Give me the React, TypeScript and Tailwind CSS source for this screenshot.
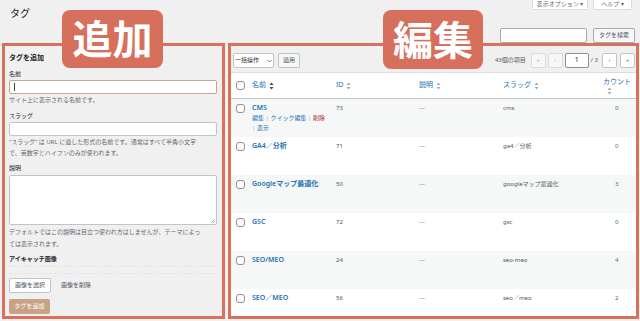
import React from "react";

const rows = [
  { name: "CMS", id: 73, slug: "cms", count: 0, actions: true },
  { name: "GA4／分析", id: 71, slug: "ga4／分析", count: 0 },
  { name: "Googleマップ最適化", id: 50, slug: "googleマップ最適化", count: 3 },
  { name: "GSC", id: 72, slug: "gsc", count: 0 },
  { name: "SEO/MEO", id: 24, slug: "seo-meo", count: 4 },
  { name: "SEO／MEO", id: 56, slug: "seo／meo", count: 2 },
];

function SortIcon({ dark = false }: { dark?: boolean }) {
  const c = dark ? "#3c434a" : "#a7aaad";
  return (
    <svg width="5" height="8" viewBox="0 0 5 8" className="shrink-0">
      <path d="M2.5 0.5 L4.5 3 L0.5 3 Z" fill={c} />
      <path d="M0.5 5 L4.5 5 L2.5 7.5 Z" fill={c} />
    </svg>
  );
}

function Check() {
  return <div className="w-[9px] h-[9px] rounded-[3px] border border-[#8c8f94] bg-white shrink-0" />;
}

function PageBtn({ label, off = false }: { label: string; off?: boolean }) {
  return (
    <div
      className={`w-[15px] h-[15px] flex items-center justify-center rounded-[2px] border text-[6px] ${
        off ? "border-[#dcdcde] bg-[#f6f7f7] text-[#a7aaad]" : "border-[#c3c4c7] bg-white text-[#50575e]"
      }`}
    >
      {label}
    </div>
  );
}

export default function App() {
  return (
    <div className="w-[640px] h-[321px] bg-[#f0f0f1] relative overflow-hidden font-['Noto_Sans','Noto_Sans_CJK_JP',sans-serif] text-[#1d2327]">
      {/* header */}
      <div className="h-[43px] flex justify-between items-start">
        <h1 className="pl-[10px] pt-[8px] text-[10px] leading-[10px]">タグ</h1>
        <div className="flex flex-col items-end pr-[5px]">
          <div className="flex gap-[5px] mr-[3px] mt-[-3px]">
            <div className="w-[56px] h-[13px] pt-[3px] flex items-center justify-center bg-white border border-t-0 border-[#dcdcde] rounded-b-[2px] text-[6px] text-[#646970]">
              表示オプション ▾
            </div>
            <div className="w-[39px] h-[13px] pt-[3px] flex items-center justify-center bg-white border border-t-0 border-[#dcdcde] rounded-b-[2px] text-[6px] text-[#646970]">
              ヘルプ ▾
            </div>
          </div>
          <div className="flex gap-[6px] mt-[18px]">
            <div className="w-[87px] h-[15px] bg-white border border-[#a7aaad] rounded-[2px]" />
            <div className="w-[42px] h-[15px] flex items-center justify-center bg-[#f6f7f7] border border-[#a7aaad] rounded-[2px] text-[6px] text-[#50575e]">
              タグを検索
            </div>
          </div>
        </div>
      </div>

      {/* panels */}
      <div className="flex gap-[3px] pl-[2px]">
        {/* left: add tag */}
        <div className="w-[223px] h-[276px] border-[3px] border-[#d8725e] pl-[4px] pr-[5px] overflow-hidden">
          <h2 className="mt-[7px] text-[7px] leading-[10px] font-bold">タグを追加</h2>
          <div className="mt-[7px] text-[6px] leading-[9px]">名前</div>
          <div className="mt-[1px] h-[14px] bg-white border border-[#c9a48c] rounded-[2px] flex items-center pl-[4px]">
            <div className="w-px h-[8px] bg-[#3c434a]" />
          </div>
          <div className="mt-[2px] text-[6px] leading-[9px] text-[#646970]">サイト上に表示される名前です。</div>
          <div className="mt-[7px] text-[6px] leading-[9px]">スラッグ</div>
          <div className="mt-[1px] h-[14px] bg-white border border-[#c3c4c7] rounded-[2px]" />
          <div className="mt-[1px] text-[6px] leading-[11px] text-[#646970] whitespace-nowrap">
            “スラッグ” は URL に適した形式の名前です。通常はすべて半角小文字
            <br />
            で、英数字とハイフンのみが使われます。
          </div>
          <div className="mt-[5px] text-[6px] leading-[9px]">説明</div>
          <div className="mt-[2px] h-[50px] bg-white border border-[#c3c4c7] rounded-[2px] flex items-end justify-end p-[1px]">
            <svg width="5" height="5" viewBox="0 0 5 5">
              <path d="M1 5 L5 1 M3 5 L5 3" stroke="#a7aaad" strokeWidth="0.7" />
            </svg>
          </div>
          <div className="mt-[1px] text-[6px] leading-[12px] text-[#646970] whitespace-nowrap">
            デフォルトではこの説明は目立つ使われ方はしませんが、テーマによっ
            <br />
            ては表示されます。
          </div>
          <div className="mt-[5px] text-[6px] leading-[9px] font-bold">アイキャッチ画像</div>
          <div className="mt-[2px] h-[8px] border-y border-dashed border-[#e2e3e4]" />
          <div className="mt-[4px] flex items-center gap-[10px]">
            <div className="w-[42px] h-[15px] flex items-center justify-center bg-white border border-[#c3c4c7] rounded-[2px] text-[6px] text-[#50575e]">
              画像を選択
            </div>
            <span className="text-[6px] text-[#50575e]">画像を削除</span>
          </div>
          <div className="mt-[6px] w-[41px] h-[15px] flex items-center justify-center bg-[#c9a285] rounded-[2px] text-[6px] text-white">
            タグを追加
          </div>
        </div>

        {/* right: tag list */}
        <div className="w-[411px] h-[276px] border-[3px] border-[#d8725e] overflow-hidden">
          <div className="mt-[7px] flex items-center pl-[2px] pr-[1px]">
            <div className="w-[41px] h-[15px] flex items-center justify-between px-[1px] bg-white border border-[#c3c4c7] rounded-[2px] text-[6px] text-[#2c3338]">
              一括操作
              <svg width="5" height="4" viewBox="0 0 5 4">
                <path d="M0.5 1 L2.5 3 L4.5 1" stroke="#50575e" strokeWidth="0.8" fill="none" />
              </svg>
            </div>
            <div className="ml-[4px] w-[22px] h-[15px] flex items-center justify-center bg-[#f6f7f7] border border-[#c3c4c7] rounded-[2px] text-[6px] text-[#50575e]">
              適用
            </div>
            <div className="ml-auto flex items-center">
              <span className="text-[6px] text-[#50575e] mr-[5px]">43個の項目</span>
              <PageBtn label="«" off />
              <div className="w-[2px]" />
              <PageBtn label="‹" off />
              <div className="ml-[2px] w-[24px] h-[15px] flex items-center justify-center bg-white border border-[#8c8f94] rounded-[2px] text-[7px]">
                1
              </div>
              <span className="ml-[2px] mr-[4px] text-[6px] text-[#50575e]">/ 3</span>
              <PageBtn label="›" />
              <div className="w-[3px]" />
              <PageBtn label="»" />
            </div>
          </div>

          <div className="mt-[4px] bg-white border-t border-[#dcdcde]">
            <div className="h-[26px] grid grid-cols-[17px_84px_83px_84px_99px_1fr] items-center border-b border-[#c3c4c7] text-[7px] text-[#2271b1]">
              <div className="pl-[5px]">
                <Check />
              </div>
              <div className="pl-[4px] flex items-center gap-[3px]">
                名前 <SortIcon dark />
              </div>
              <div className="pl-[4px] flex items-center gap-[3px]">
                ID <SortIcon />
              </div>
              <div className="pl-[4px] flex items-center gap-[3px]">
                説明 <SortIcon />
              </div>
              <div className="pl-[4px] flex items-center gap-[3px]">
                スラッグ <SortIcon />
              </div>
              <div className="flex flex-col items-start pl-[5px] leading-[9px]">
                カウント
                <div className="pl-[4px] pt-[1px]">
                  <SortIcon />
                </div>
              </div>
            </div>

            {rows.map((r, i) => (
              <div
                key={r.id}
                className={`h-[38px] grid grid-cols-[17px_84px_83px_84px_99px_1fr] items-start pt-[4px] ${
                  i % 2 === 0 ? "bg-[#f6f7f7]" : "bg-white"
                }`}
              >
                <div className="pl-[5px] pt-[1px]">
                  <Check />
                </div>
                <div className="pl-[4px]">
                  <div className="text-[7px] leading-[10px] font-semibold text-[#2271b1] whitespace-nowrap">{r.name}</div>
                  {r.actions && (
                    <div className="text-[6px] leading-[10px] whitespace-nowrap text-[#a7aaad]">
                      <span className="text-[#2271b1]">編集</span> | <span className="text-[#2271b1]">クイック編集</span> |{" "}
                      <span className="text-[#b32d2e]">削除</span>
                      <br />| <span className="text-[#2271b1]">表示</span>
                    </div>
                  )}
                </div>
                <div className="pl-[4px] text-[6px] leading-[10px] text-[#50575e]">{r.id}</div>
                <div className="pl-[4px] text-[6px] leading-[10px] text-[#8c8f94]">—</div>
                <div className="pl-[4px] text-[6px] leading-[10px] text-[#50575e] whitespace-nowrap">{r.slug}</div>
                <div className="pl-[17px] text-[6px] leading-[10px] text-[#2271b1]">{r.count}</div>
              </div>
            ))}
          </div>
        </div>
      </div>

      {/* annotation labels */}
      <div className="absolute left-[62px] top-[10px] w-[101px] h-[58px] rounded-[8px] bg-[#d6705c] flex items-center justify-center text-white text-[40px] font-bold leading-none">
        追加
      </div>
      <div className="absolute left-[383px] top-[10px] w-[100px] h-[59px] rounded-[8px] bg-[#d6705c] flex items-center justify-center text-white text-[40px] font-bold leading-none">
        編集
      </div>
    </div>
  );
}
